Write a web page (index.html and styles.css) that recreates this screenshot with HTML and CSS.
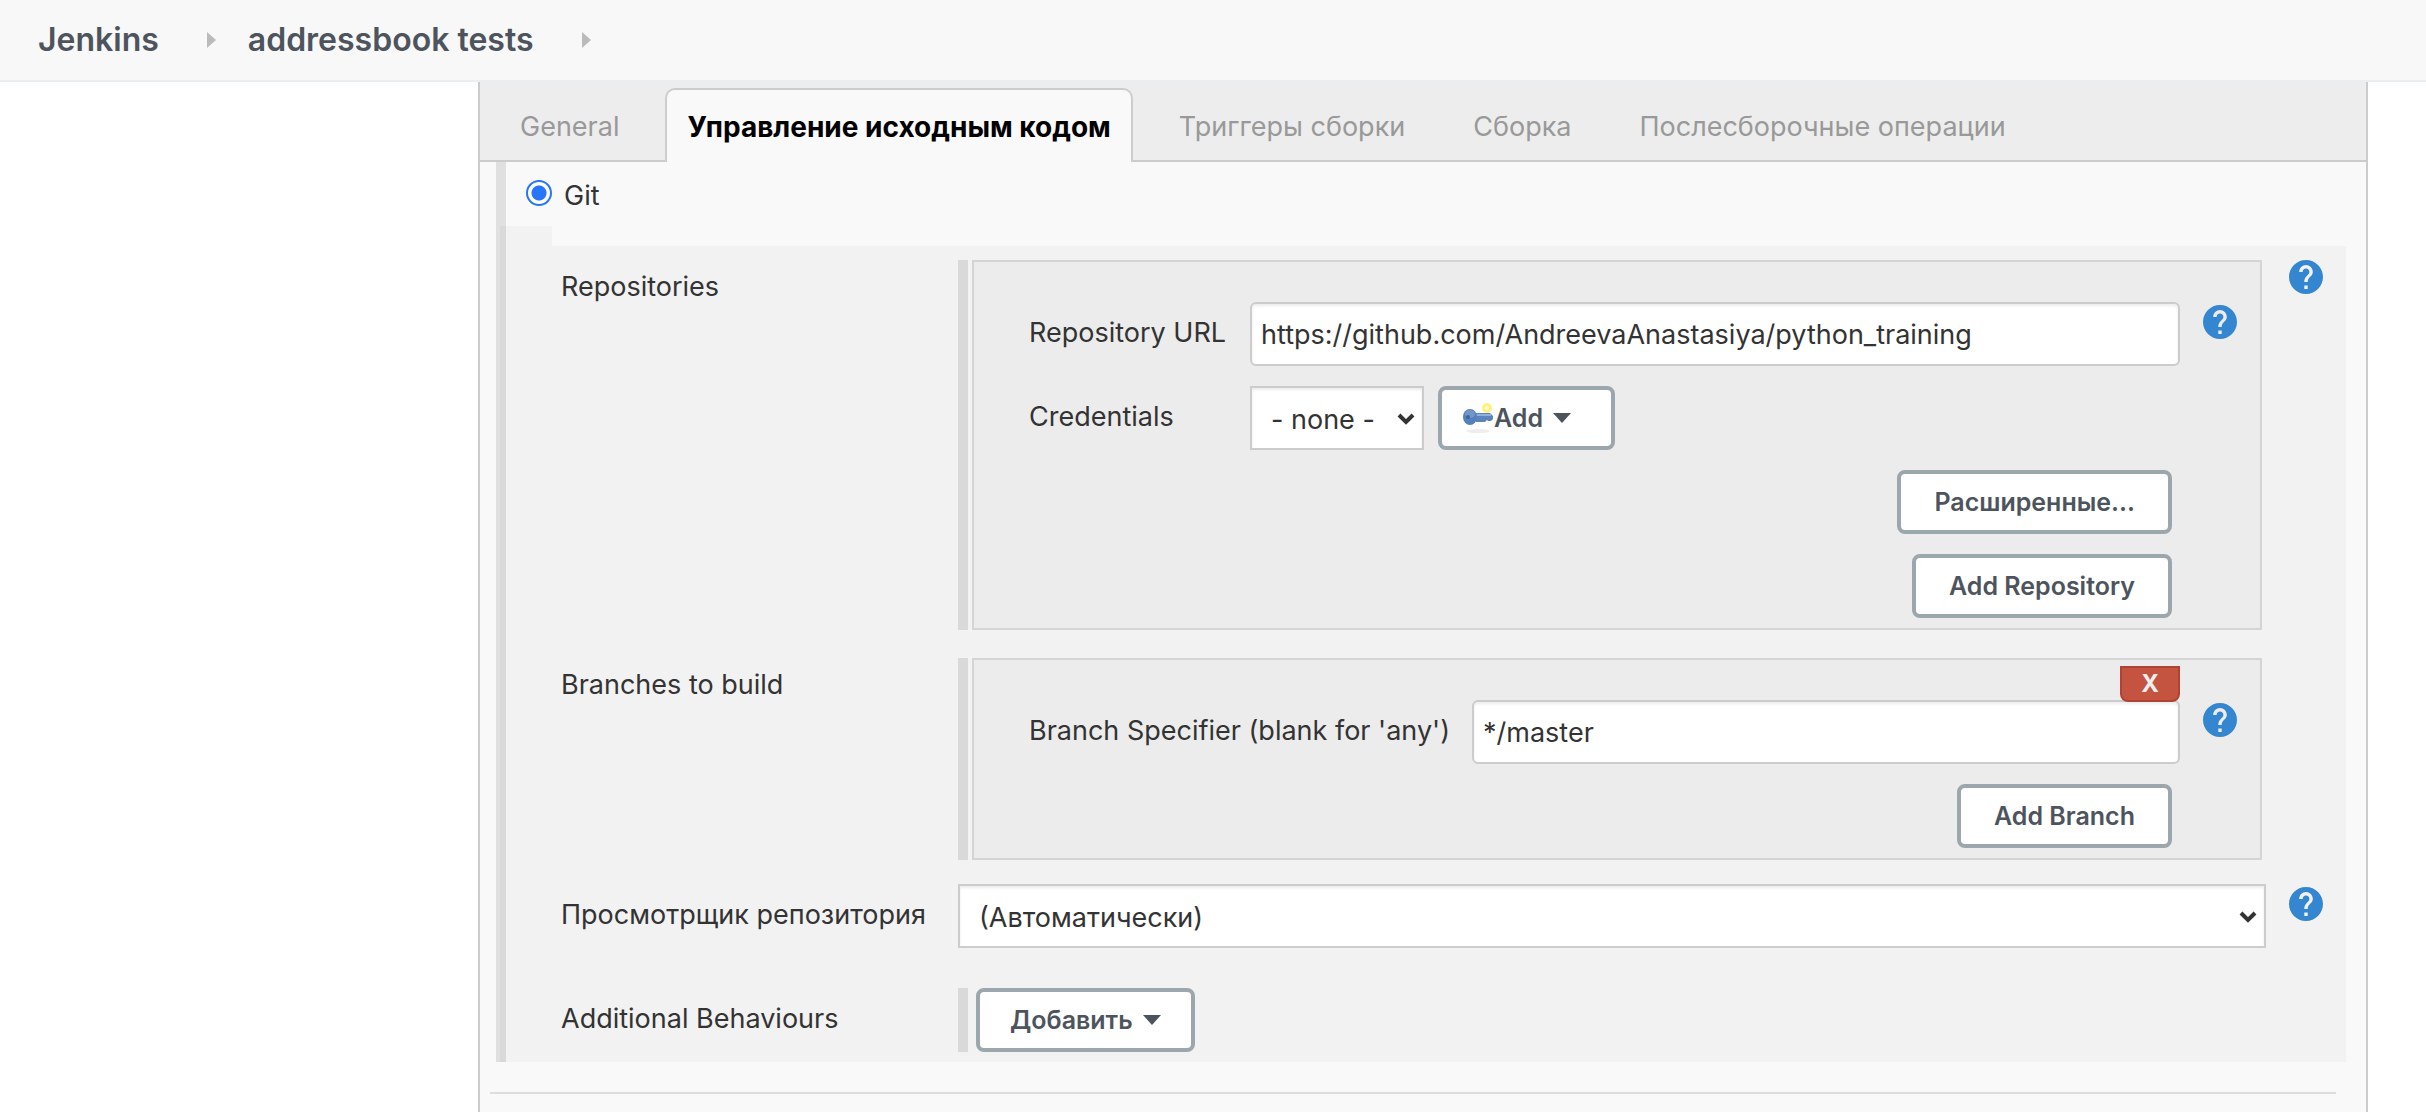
FILE: index.html
```html
<!DOCTYPE html>
<html lang="ru">
<head>
<meta charset="utf-8">
<title>addressbook tests Config [Jenkins]</title>
<link rel="stylesheet" href="styles.css">
</head>
<body>
<svg class="sprite" aria-hidden="true">
  <symbol id="help" viewBox="2 2 20 20">
    <path fill="#3586d0" d="M12 2C6.480 2 2 6.480 2 12s4.480 10 10 10 10-4.480 10-10S17.520 2 12 2zm1 17h-2v-2h2v2zm2.070-7.750l-.9.920C13.450 12.900 13 13.500 13 15h-2v-.5c0-1.100.450-2.100 1.170-2.830l1.240-1.260c.370-.360.590-.860.590-1.410 0-1.100-.9-2-2-2s-2 .9-2 2H8c0-2.210 1.790-4 4-4s4 1.790 4 4c0 .880-.360 1.680-.930 2.250z"/>
  </symbol>
  <symbol id="chevron" viewBox="0 0 18 12">
    <path d="M2 2l7 7 7-7" fill="none" stroke="#333" stroke-width="4"/>
  </symbol>
  <symbol id="crumb" viewBox="0 0 9 16"><path d="M0 0l9 8-9 8z" fill="#bbb"/></symbol>
  <symbol id="caret" viewBox="0 0 18 10"><path d="M0 0h18l-9 10z" fill="#4d545d"/></symbol>
</svg>

<header class="breadcrumbs">
  <a href="#">Jenkins</a>
  <svg class="crumb"><use href="#crumb"/></svg>
  <a href="#">addressbook tests</a>
  <svg class="crumb"><use href="#crumb"/></svg>
</header>

<main class="config">
  <nav class="tabs">
    <a href="#" class="tab">General</a>
    <a href="#" class="tab active">Управление исходным кодом</a>
    <a href="#" class="tab">Триггеры сборки</a>
    <a href="#" class="tab">Сборка</a>
    <a href="#" class="tab">Послесборочные операции</a>
  </nav>

  <form class="scm">
    <label class="scm-choice"><input type="radio" name="scm" checked>Git</label>
    <div class="notch"></div>
    <div class="settings">
      <section class="row">
        <h3 class="name">Repositories</h3>
        <div class="repeatable">
          <div class="chunk">
            <div class="field field-repo">
              <label class="caption" for="url">Repository URL</label>
              <input class="text" id="url" type="text" value="https://github.com/AndreevaAnastasiya/python_training">
              <a class="help" href="#" aria-label="Help"><svg><use href="#help"/></svg></a>
            </div>
            <div class="field field-repo">
              <label class="caption" for="credentials">Credentials</label>
              <div class="inline">
                <div class="select select-small">
                  <select id="credentials"><option>- none -</option></select>
                  <svg><use href="#chevron"/></svg>
                </div>
                <button type="button" class="button button-key">
                  <svg class="key" viewBox="0 0 32 32">
                    <ellipse cx="16" cy="29" rx="12" ry="2" fill="#eee"/>
                    <circle cx="25" cy="6" r="5" fill="#fff27a"/>
                    <circle cx="25" cy="6" r="2" fill="#fffbd0"/>
                    <path d="M13 11h15l3 3v3l-2 2h-3l-1-1-2 2h-9z" fill="#5b84bd"/>
                    <path d="M12 13h17" stroke="#8fb0dc" stroke-width="2"/>
                    <ellipse cx="8" cy="15" rx="7" ry="8" fill="#5580bb"/>
                    <ellipse cx="8" cy="12" rx="5" ry="4" fill="#7396c9"/>
                    <circle cx="6" cy="15" r="2" fill="#3f6499"/>
                  </svg>Add<svg class="caret"><use href="#caret"/></svg>
                </button>
              </div>
            </div>
            <div class="actions"><button type="button" class="button">Расширенные...</button></div>
            <div class="actions"><button type="button" class="button">Add Repository</button></div>
          </div>
        </div>
        <a class="help" href="#" aria-label="Help"><svg><use href="#help"/></svg></a>
      </section>

      <section class="row">
        <h3 class="name">Branches to build</h3>
        <div class="repeatable">
          <div class="chunk">
            <button type="button" class="delete">X</button>
            <div class="field field-branch">
              <label class="caption" for="branch">Branch Specifier (blank for 'any')</label>
              <input class="text" id="branch" type="text" value="*/master">
              <a class="help" href="#" aria-label="Help"><svg><use href="#help"/></svg></a>
            </div>
            <div class="actions"><button type="button" class="button">Add Branch</button></div>
          </div>
        </div>
      </section>

      <div class="row row-browser">
        <label class="caption" for="browser">Просмотрщик репозитория</label>
        <div class="select">
          <select id="browser"><option>(Автоматически)</option></select>
          <svg><use href="#chevron"/></svg>
        </div>
        <a class="help" href="#" aria-label="Help"><svg><use href="#help"/></svg></a>
      </div>

      <div class="row">
        <span class="caption">Additional Behaviours</span>
        <div class="repeatable behaviours">
          <button type="button" class="button button-menu">Добавить<svg class="caret"><use href="#caret"/></svg></button>
        </div>
      </div>
    </div>
  </form>
  <hr class="divider">
</main>
</body>
</html>
```
FILE: styles.css
```css
* { box-sizing: border-box; }

body {
  margin: 0;
  min-height: 100vh;
  display: flex;
  flex-direction: column;
  background: #fff;
  color: #333;
  font: 27px/32px Inter, "Liberation Sans", sans-serif;
}

a { color: inherit; text-decoration: none; }
svg { display: block; flex: none; }
.sprite { position: absolute; width: 0; height: 0; }

/* Breadcrumb bar */
.breadcrumbs {
  display: flex;
  align-items: center;
  height: 82px;
  padding: 0 38px;
  border-bottom: 2px solid #eaeef1;
  background: #f8f8f8;
  color: #4d545d;
  font-size: 32px;
  font-weight: 600;
}
.crumb { width: 9px; height: 16px; margin: 0 32px 0 48px; }

/* Configuration panel */
.config {
  flex: 1;
  margin: 0 58px 0 478px;
  padding-bottom: 18px;
  border: solid #ccc;
  border-width: 0 2px;
  background: #f9f9f9;
}

.tabs {
  display: flex;
  gap: 24px;
  height: 80px;
  padding: 6px 0 0 18px;
  border-bottom: 2px solid #ccc;
  background: #ededed;
  color: #999;
  white-space: nowrap;
}
.tab {
  height: 74px;
  padding: 21px 20px 0;
  border: 2px solid transparent;
  border-bottom: 0;
  border-radius: 10px 10px 0 0;
}
.active {
  border-color: #ccc;
  background: #f9f9f9;
  color: #000;
  font-size: 28px;
  font-weight: 700;
}

/* Source control block with the grey rail on its left */
.scm {
  margin: 0 20px 0 16px;
  padding-left: 4px;
  background: linear-gradient(#e0e0e0, #e0e0e0) left / 10px 100% no-repeat;
}
.scm-choice {
  display: flex;
  gap: 12px;
  height: 64px;
  padding: 18px 0 0 26px;
}
.scm-choice input {
  appearance: none;
  width: 26px;
  height: 26px;
  margin: 0;
  border: 2px solid #2676f7;
  border-radius: 50%;
  background: radial-gradient(#2676f7 0 7px, #fff 8px);
}
.notch { width: 52px; height: 20px; background: rgba(0, 0, 0, .027); }
.settings {
  display: flex;
  flex-direction: column;
  gap: 28px;
  padding: 14px 0 10px 61px;
  background: rgba(0, 0, 0, .027);
}

.row { display: grid; grid-template-columns: 397px 1fr 80px; }
.row-browser { margin: -4px 0 12px; }
.name { margin: 0; padding-top: 11px; font-size: inherit; font-weight: 400; }
.caption { padding-top: 15px; white-space: nowrap; }
.help { padding-left: 23px; }
.help svg { width: 34px; height: 34px; }
.row-browser .help, .field .help { padding-top: 3px; }

.repeatable {
  margin-right: 4px;
  padding-left: 4px;
  border-left: 10px solid #d9d9d9;
}
.behaviours { padding-left: 8px; }
.chunk {
  display: flex;
  flex-direction: column;
  gap: 20px;
  padding: 40px 0 10px 55px;
  border: 2px solid #d4d4d4;
  background: #ececec;
  position: relative;
}
.field { display: grid; }
.field-repo { grid-template-columns: 221px 1fr 80px; }
.field-branch { grid-template-columns: 443px 1fr 80px; }
.inline { display: flex; gap: 14px; }
.actions { display: flex; justify-content: flex-end; padding-right: 88px; }

/* Controls */
.text, select {
  width: 100%;
  height: 64px;
  margin: 0;
  border: 2px solid #ccc;
  background: #fff;
  box-shadow: inset 0 2px 3px rgba(0, 0, 0, .08);
  color: #333;
  font: inherit;
}
.text { padding: 0 9px; border-radius: 6px; }
.select { position: relative; }
.select-small { width: 174px; }
select { appearance: none; padding: 4px 19px 0; border-radius: 0; }
.select svg {
  position: absolute;
  top: 27px;
  right: 9px;
  width: 18px;
  height: 12px;
  pointer-events: none;
}

.button {
  display: inline-flex;
  align-items: center;
  height: 64px;
  padding: 0 33px;
  border: 4px solid #9ba6ad;
  border-radius: 8px;
  background: #fff;
  color: #4d545d;
  font: 600 25px/32px Inter, "Liberation Sans", sans-serif;
  white-space: nowrap;
}
.caret { width: 18px; height: 10px; margin-left: 10px; }
.button-key { padding: 0 40px 0 20px; }
.button-menu { padding: 0 30px; }
.key { width: 32px; height: 32px; }

.delete {
  position: absolute;
  top: 6px;
  right: 80px;
  width: 60px;
  height: 36px;
  padding: 0;
  border: 2px solid #b04333;
  border-radius: 0 0 8px 8px;
  background: #c45340;
  color: #eee;
  font: 700 24px/32px Inter, "Liberation Sans", sans-serif;
}

.divider {
  height: 2px;
  margin: 30px 30px 0 10px;
  border: 0;
  background: #ddd;
}
```
